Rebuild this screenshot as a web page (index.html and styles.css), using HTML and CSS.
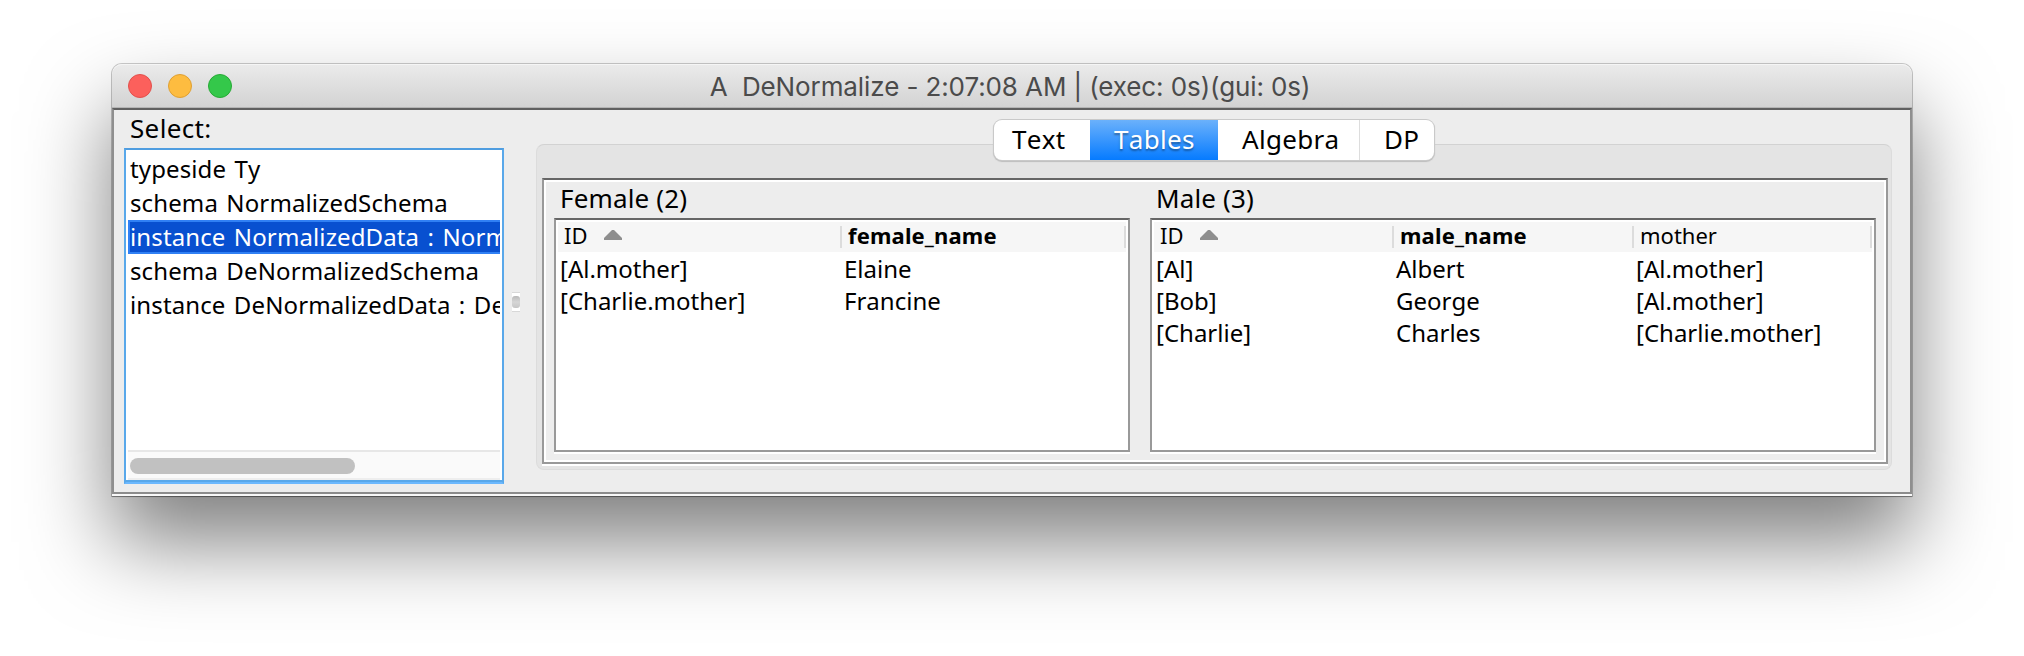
FILE: index.html
```html
<!DOCTYPE html>
<html lang="en">
<head>
<meta charset="utf-8">
<title>A DeNormalize</title>
<link rel="stylesheet" href="styles.css">
</head>
<body>
<main class="window">
  <header class="titlebar">
    <div class="lights"><i class="light red"></i><i class="light yellow"></i><i class="light green"></i></div>
    <h1 class="title">A&nbsp; DeNormalize - 2:07:08 AM | (exec: 0s)(gui: 0s)</h1>
  </header>
  <div class="content">
    <aside class="sidebar">
      <div class="label select-label">Select:</div>
      <div class="listbox">
        <ul class="list">
          <li>typeside Ty</li>
          <li>schema NormalizedSchema</li>
          <li class="selected">instance NormalizedData : Norm</li>
          <li>schema DeNormalizedSchema</li>
          <li>instance DeNormalizedData : De</li>
        </ul>
        <div class="scrollbar"><div class="thumb"></div></div>
      </div>
    </aside>
    <div class="splitter"><div class="grip"></div></div>
    <section class="pane">
      <nav class="tabs">
        <span class="tab tab-text">Text</span><span class="tab tab-tables active">Tables</span><span class="tab tab-algebra">Algebra</span><span class="tab tab-dp">DP</span>
      </nav>
      <div class="tables">
        <section class="group female">
          <div class="label">Female (2)</div>
          <div class="frame">
            <div class="row head"><span>ID<svg class="sort" width="18" height="10" viewBox="0 0 18 10"><path d="M0 10V8L8 0h2l8 8v2z"/></svg></span><span class="key">female_name</span></div>
            <div class="row"><span>[Al.mother]</span><span>Elaine</span></div>
            <div class="row"><span>[Charlie.mother]</span><span>Francine</span></div>
          </div>
        </section>
        <section class="group male">
          <div class="label">Male (3)</div>
          <div class="frame">
            <div class="row head"><span>ID<svg class="sort" width="18" height="10" viewBox="0 0 18 10"><path d="M0 10V8L8 0h2l8 8v2z"/></svg></span><span class="key">male_name</span><span>mother</span></div>
            <div class="row"><span>[Al]</span><span>Albert</span><span>[Al.mother]</span></div>
            <div class="row"><span>[Bob]</span><span>George</span><span>[Al.mother]</span></div>
            <div class="row"><span>[Charlie]</span><span>Charles</span><span>[Charlie.mother]</span></div>
          </div>
        </section>
      </div>
    </section>
  </div>
</main>
</body>
</html>
```
FILE: styles.css
```css
* { box-sizing: border-box; }
body {
  margin: 0;
  padding: 64px 112px 0;
  height: 656px;
  overflow: hidden;
  background: #fff;
  color: #000;
  font-family: "Noto Sans", "Open Sans", sans-serif;
  font-kerning: none;
}
.window {
  width: 1800px;
  height: 432px;
  border-radius: 10px 10px 0 0;
  background: #ededed;
  box-shadow: 0 0 0 1px rgba(0,0,0,.2), 0 1px 1px rgba(0,0,0,.3), 0 46px 84px rgba(0,0,0,.5);
}
.titlebar {
  position: relative;
  display: flex;
  align-items: center;
  justify-content: center;
  height: 44px;
  border-radius: 10px 10px 0 0;
  background: linear-gradient(#ebebeb, #d2d2d2);
  box-shadow: inset 0 1px 0 #f5f5f5, inset 0 -1px 0 #b4b4b4;
}
.lights { position: absolute; left: 16px; top: 10px; display: flex; gap: 16px; }
.light { width: 24px; height: 24px; border-radius: 50%; border: 1px solid; }
.red { background: #fc605c; border-color: #e2504c; }
.yellow { background: #fdbc40; border-color: #dfa033; }
.green { background: #34c84a; border-color: #27aa35; }
.title {
  margin: 2px 0 0 -4px;
  font: 400 26px/44px Inter, Roboto, sans-serif;
  font-kerning: normal;
  letter-spacing: -.1px;
  color: #4b4b4b;
  white-space: nowrap;
}
.content {
  display: flex;
  height: 386px;
  border: 2px solid #8f8f8f;
  border-top-color: #606060;
  border-bottom-color: #8c8c8c;
  box-shadow: 0 2px 0 #f8f8f8;
}
.label { font-size: 26px; line-height: 36px; letter-spacing: .15px; white-space: nowrap; }
.sidebar { width: 390px; padding-left: 10px; }
.select-label { height: 38px; padding-left: 6px; letter-spacing: .35px; }
.listbox {
  display: flex;
  flex-direction: column;
  width: 380px;
  height: 336px;
  padding: 2px 2px 0;
  background: #fff;
  border: 2px solid #59a8ea;
  border-top-color: #4f9de0;
  border-bottom: 2px solid #6bb8fe;
  box-shadow: inset 0 -2px 0 #59a8ea;
}
.list { flex: 1; margin: 0; padding: 0; list-style: none; overflow: hidden; }
.list li {
  height: 34px;
  padding-left: 2px;
  font-size: 24px;
  line-height: 34px;
  letter-spacing: .12px;
  word-spacing: 2px;
  white-space: nowrap;
  overflow: hidden;
}
.list .selected { padding-left: 0; line-height: 30px; background: #0850d0; border: 2px solid #3080f4; border-right: 0; color: #fff; }
.scrollbar { height: 30px; margin-bottom: 2px; padding: 6px 2px; background: #fafafa; border-top: 2px solid #e7e7e7; border-bottom: 2px solid #eee; }
.thumb { width: 225px; height: 16px; border-radius: 8px; background: #c1c1c1; }
.splitter { width: 32px; padding: 182px 0 0 8px; }
.grip {
  display: flex;
  width: 8px;
  height: 20px;
  padding: 3px 0;
  border: solid #d8d8d8;
  border-width: 1px 0;
  background: #fff;
}
.grip::before { content: ""; flex: 1; border-radius: 3px; background: linear-gradient(#b9b9b9, #d6d6d6 50%, #c6c6c6); }
.pane {
  position: relative;
  width: 1356px;
  height: 326px;
  margin-top: 34px;
  padding: 33px 3px 0 5px;
  border: 1px solid #dcdcdc;
  border-top-color: #d2d2d2;
  border-radius: 8px;
  background: #e4e4e4;
}
/* The segmented control straddles the pane's top edge. */
.tabs {
  position: absolute;
  left: 457px;
  top: -25px;
  display: flex;
  height: 40px;
  border-radius: 8px;
  background: #fff;
  box-shadow: 0 0 0 1px #c9c9c9, 0 1px 1px 1px #bdbdbd;
}
.tab { font-size: 26px; line-height: 39px; letter-spacing: .3px; }
.tab-text { width: 96px; padding-left: 18px; }
.tab-tables { width: 128px; padding-left: 24px; }
.tab-algebra { width: 142px; padding-left: 24px; border-right: 1px solid #ddd; }
.tab-dp { width: 74px; padding-left: 24px; }
.tab.active { background: linear-gradient(#6bb1fb, #067bff); color: #fff; text-shadow: 0 2px 2px rgba(0,0,0,.35); }
.tables {
  display: flex;
  gap: 20px;
  width: 1346px;
  height: 286px;
  padding: 2px 10px 0;
  background: #ededed;
  border: 2px solid #999;
  border-top-color: #666;
  box-shadow: inset 0 0 0 2px #fff, 0 2px 0 #fff;
}
.group .label { height: 36px; padding-left: 6px; line-height: 32px; }
.female { width: 576px; }
.male { width: 726px; }
.frame {
  height: 234px;
  padding: 2px;
  background: #fff;
  border: 2px solid #999;
  border-top-color: #666;
  box-shadow: 0 2px 0 #fff;
}
.row { display: grid; height: 32px; font-size: 24px; line-height: 30px; white-space: nowrap; }
.female .row { grid-template-columns: 284px 284px; }
.male .row { grid-template-columns: 240px 240px 238px; }
.row span { padding-left: 2px; }
.head { height: 30px; margin-bottom: 2px; padding: 4px 0; background: #f6f6f6; font-size: 22px; }
.head span { height: 22px; padding-left: 6px; border-right: 2px solid #dcdcdc; line-height: 19px; }
.head .key { font-weight: 700; letter-spacing: .15px; }
.sort { margin-left: 16px; vertical-align: 4px; fill: #8e8e8e; }
```
